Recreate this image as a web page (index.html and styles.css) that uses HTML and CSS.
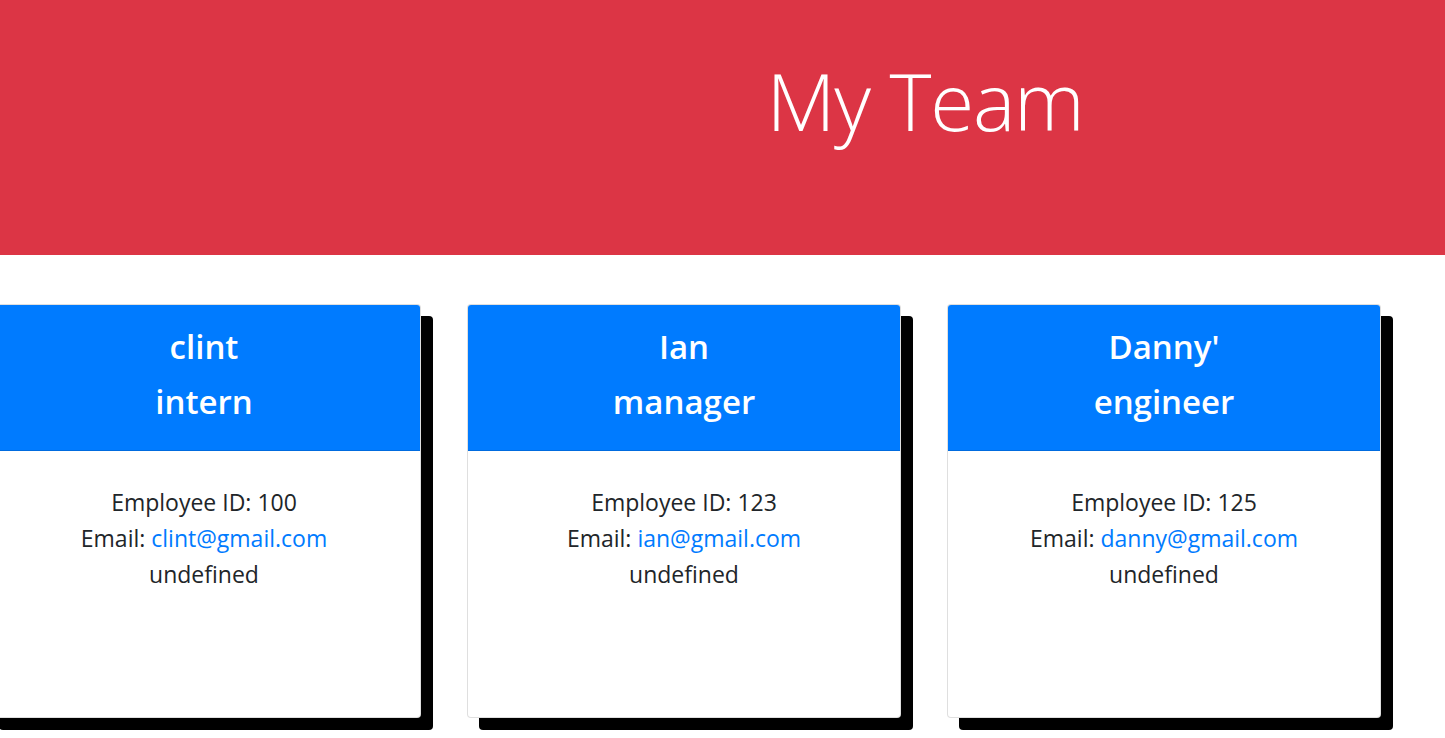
FILE: index.html
```html
<!DOCTYPE html>
<html lang="en">
<head>
<meta charset="utf-8">
<title>My Team</title>
<link rel="stylesheet" href="styles.css">
</head>
<body>
<header class="jumbotron">
  <h1 class="title">My Team</h1>
</header>
<main class="team">
  <section class="card">
    <div class="card-header">
      <h2 class="card-title">clint<br>intern</h2>
    </div>
    <div class="card-body">
      <p class="line">Employee ID: 100</p>
      <p class="line">Email: <a href="mailto:clint@gmail.com">clint@gmail.com</a></p>
      <p class="line">undefined</p>
    </div>
  </section>
  <section class="card">
    <div class="card-header">
      <h2 class="card-title">Ian<br>manager</h2>
    </div>
    <div class="card-body">
      <p class="line">Employee ID: 123</p>
      <p class="line">Email: <a href="mailto:ian@gmail.com">ian@gmail.com</a></p>
      <p class="line">undefined</p>
    </div>
  </section>
  <section class="card">
    <div class="card-header">
      <h2 class="card-title">Danny'<br>engineer</h2>
    </div>
    <div class="card-body">
      <p class="line">Employee ID: 125</p>
      <p class="line">Email: <a href="mailto:danny@gmail.com">danny@gmail.com</a></p>
      <p class="line">undefined</p>
    </div>
  </section>
</main>
</body>
</html>
```
FILE: styles.css
```css
html {
  overflow: hidden;
}
html, body {
  margin: 0;
  padding: 0;
  background: #fff;
}
body {
  font-family: "Open Sans", "Noto Sans", sans-serif;
  color: #212529;
}
.jumbotron {
  background: #dc3545;
  height: 255px;
  box-sizing: border-box;
  padding-top: 50px;
}
.title {
  margin: 0;
  padding-left: 405px;
  text-align: center;
  color: #fff;
  font-weight: 300;
  font-size: 80px;
  line-height: 100px;
  letter-spacing: -1.2px;
}
.team {
  display: flex;
  gap: 46px;
  margin-left: -13px;
  padding-top: 49px;
  padding-bottom: 20px;
}
.card {
  flex: 0 0 434px;
  width: 434px;
  height: 414px;
  box-sizing: border-box;
  border: 1px solid rgba(0, 0, 0, 0.125);
  border-radius: 4px;
  background: #fff;
  box-shadow: 12px 12px 0 #000;
  overflow: hidden;
}
.card-header {
  background: #007bff;
  color: #fff;
  height: 146px;
  box-sizing: border-box;
  border-bottom: 1px solid rgba(0, 0, 0, 0.125);
  padding-top: 14px;
  text-align: center;
}
.card-title {
  margin: 0;
  font-size: 33px;
  font-weight: 600;
  line-height: 55px;
}
.card-body {
  padding-top: 33px;
  text-align: center;
}
.line {
  margin: 0;
  font-size: 23px;
  line-height: 36px;
}
.line a {
  color: #007bff;
  text-decoration: none;
}
```
